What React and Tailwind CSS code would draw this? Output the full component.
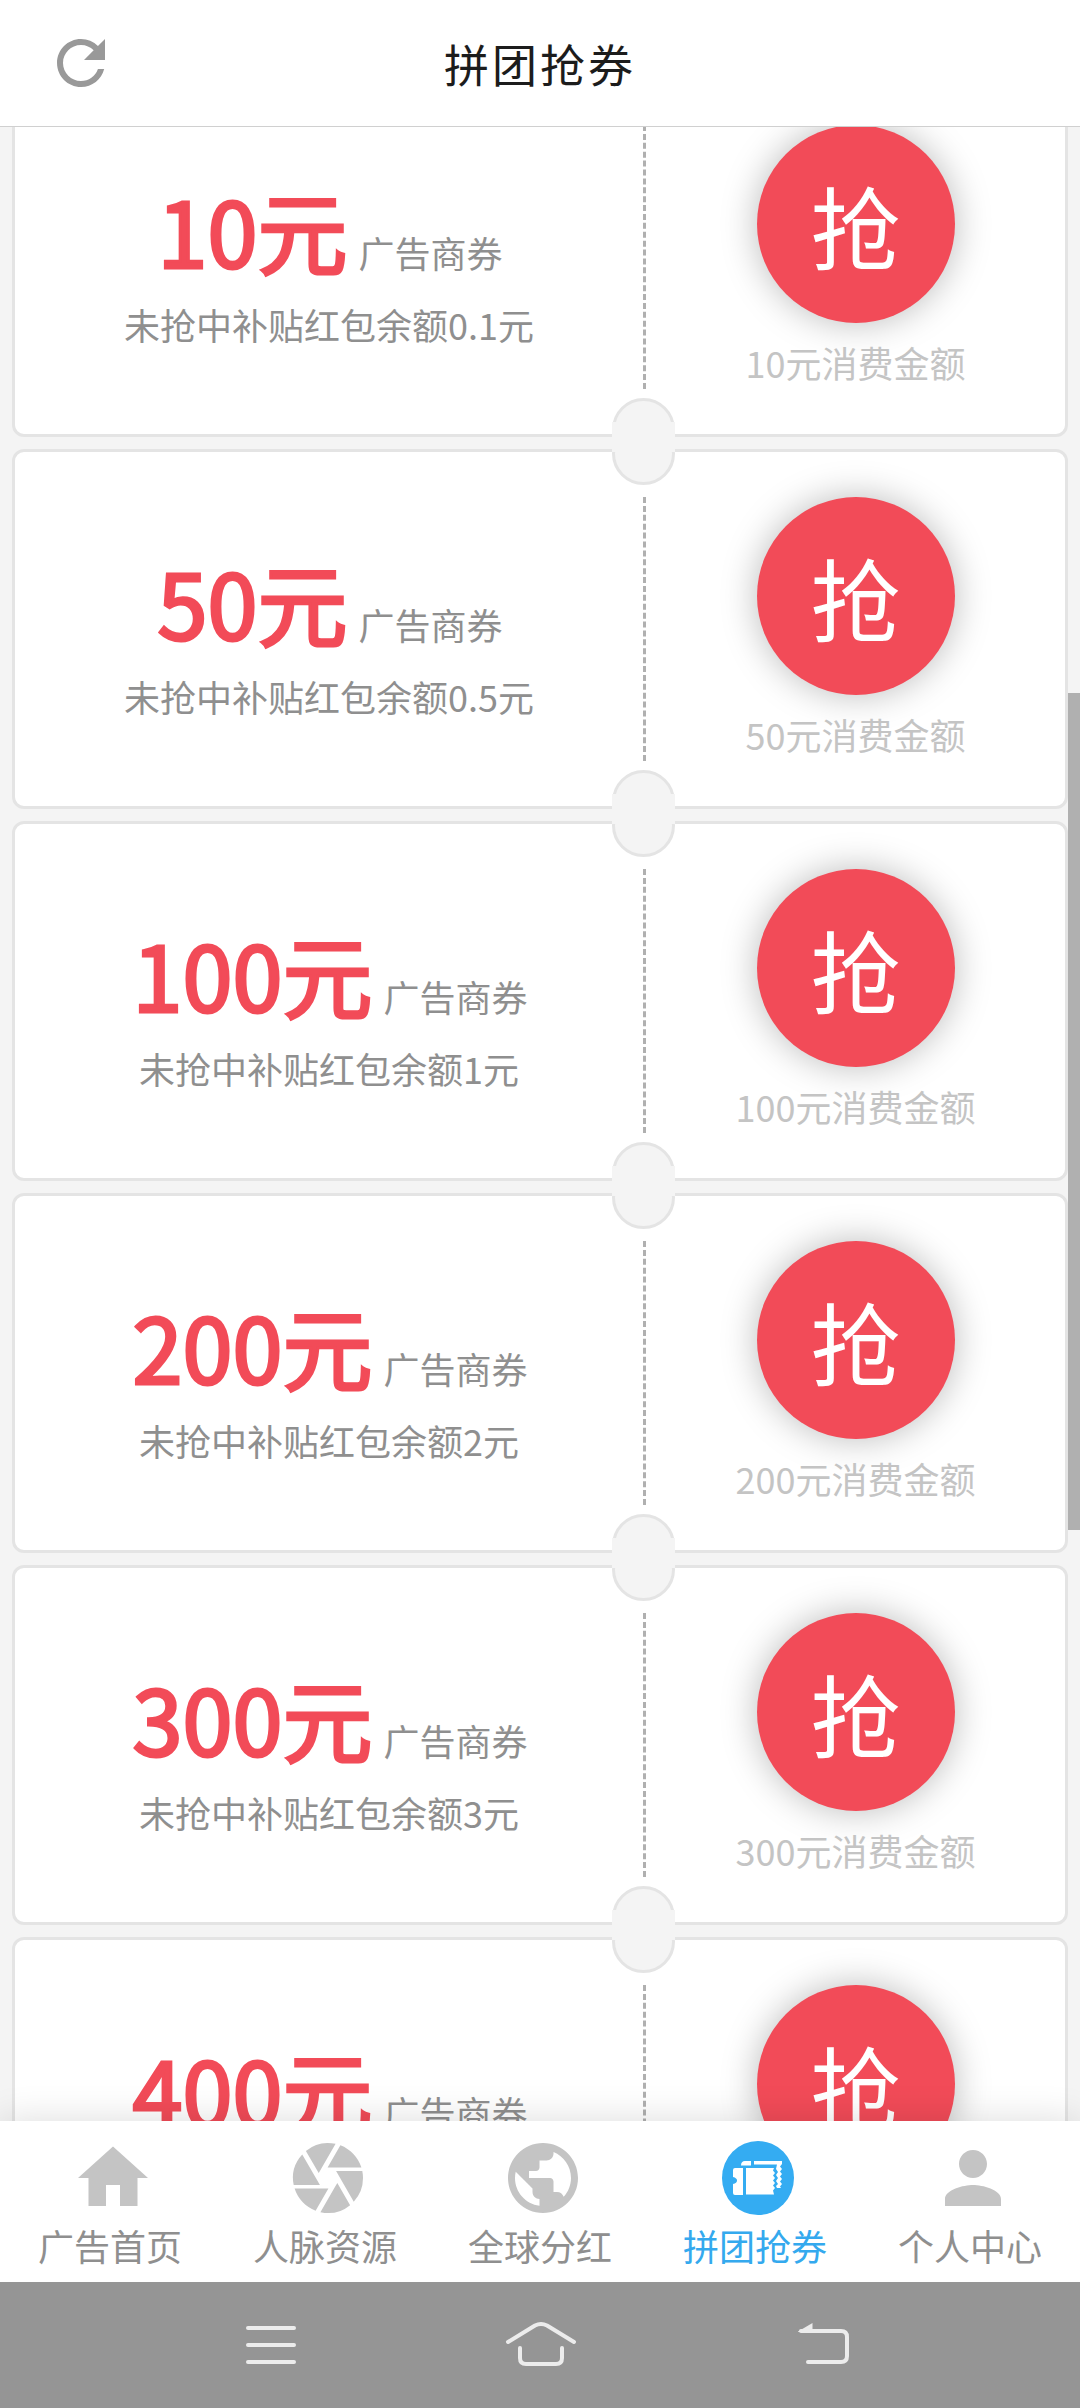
import { MdRefresh, MdHome, MdCamera, MdPublic, MdPerson } from "react-icons/md";

const coupons = [
  { amount: 10, subsidy: "0.1" },
  { amount: 50, subsidy: "0.5" },
  { amount: 100, subsidy: "1" },
  { amount: 200, subsidy: "2" },
  { amount: 300, subsidy: "3" },
  { amount: 400, subsidy: "4" },
];

function Coupon({ amount, subsidy }) {
  return (
    <article className="relative flex h-[360px] shrink-0 rounded-xl border-3 border-[#e4e4e4] bg-white">
      <div className="flex w-[628px] flex-col items-center pt-[96px]">
        <div className="flex items-baseline pl-[2px] whitespace-nowrap">
          <span className="text-[90px] leading-[106px] text-[#f24b58] [-webkit-text-stroke:3px_#f24b58]">{amount}元</span>
          <span className="ml-[11px] text-[36px] text-[#8f8f8f]">广告商券</span>
        </div>
        <p className="mt-[15px] text-[36px] leading-[54px] whitespace-nowrap text-[#8f8f8f]">未抢中补贴红包余额{subsidy}元</p>
      </div>
      <div className="mt-[45px] h-[264px] border-l-3 border-dashed border-[#b0b0b0]" />
      <div className="flex flex-1 flex-col items-center pt-[45px]">
        <button className="flex size-[198px] items-center justify-center rounded-full bg-[#f24b58] text-[90px] leading-none text-white shadow-[0_0_36px_rgba(0,0,0,0.27)]">
          抢
        </button>
        <p className="mt-[12px] text-[36px] leading-[54px] whitespace-nowrap text-[#c4c4c4]">{amount}元消费金额</p>
      </div>
      <div className="absolute top-[-30px] left-[597px] size-[63px] rounded-full border-3 border-[#e4e4e4] bg-[#f4f4f4]" />
      <div className="absolute top-[-30px] left-[597px] h-[30px] w-[63px] bg-[#f4f4f4]" />
      <div className="absolute top-[318px] left-[597px] size-[63px] rounded-full border-3 border-[#e4e4e4] bg-[#f4f4f4]" />
    </article>
  );
}

function TicketIcon() {
  return (
    <svg width="72" height="74" viewBox="0 0 72 74">
      <ellipse cx="36" cy="37" rx="36" ry="37" fill="#34acf2" />
      <g fill="#fff">
        <path d="M23 20h6v4.500H19q0-4.500 4-4.500zM32 20h28v3l-2 2.500 2 2.500-2 2.500 2 2.500-2 2.500 2 2.500-2 2.500 2 2.500-2 2.500 1 1.500h-4l-1-2 2-2-2-3 2-3-2-3 2-3-2-3 1-4.500H32z" />
        <path d="M13 27h8v27h-8q-2 0-2-2v-9q4-1 4-3.500T11 36v-7q0-2 2-2zM24 27h28l-1 2.500 2 2.500-2 2.500 2 2.500-2 2.500 2 2.500-2 2.500 2 2.500-2 2.500 1 4H24z" />
      </g>
    </svg>
  );
}

const tabs = [
  { label: "广告首页", icon: <MdHome size={84} /> },
  { label: "人脉资源", icon: <MdCamera size={84} /> },
  { label: "全球分红", icon: <MdPublic size={84} /> },
  { label: "拼团抢券", icon: <TicketIcon />, active: true },
  { label: "个人中心", icon: <MdPerson size={84} /> },
];

export default function App() {
  return (
    <div className="flex h-[2408px] w-[1080px] flex-col overflow-hidden bg-[#f4f4f4] font-['Noto_Sans_CJK_SC',sans-serif]">
      <header className="z-10 grid h-[127px] shrink-0 grid-cols-[1fr_auto_1fr] items-center border-b border-[#d0d0d0] bg-white">
        <button className="ml-[45px] size-[72px] text-[#999999]">
          <MdRefresh size={72} />
        </button>
        <h1 className="pt-[2px] text-[45px] leading-[60px] tracking-[3px] text-[#1c1c1c]">拼团抢券</h1>
      </header>

      <main className="flex min-h-0 flex-1 overflow-hidden">
        <div className="-mt-[50px] ml-3 flex w-[1056px] flex-col gap-3">
          {coupons.map((c) => (
            <Coupon key={c.amount} {...c} />
          ))}
        </div>
        <div className="mt-[566px] h-[837px] w-3 bg-[#b0b0b0]" />
      </main>

      <nav className="z-10 flex h-[161px] shrink-0 bg-white px-[2.5px] shadow-[0_0_36px_rgba(0,0,0,0.14)]">
        {tabs.map((t) => (
          <button key={t.label} className={t.active ? "flex w-[215px] flex-col items-center pt-[15px] text-[#34a9ee]" : "flex w-[215px] flex-col items-center pt-[15px] text-[#8f8f8f]"}>
            <span className={t.active ? "ml-[6px] flex h-[84px] items-center" : "ml-[6px] flex h-[84px] items-center text-[#c4c4c4]"}>{t.icon}</span>
            <span className="-mt-[2px] text-[36px] leading-[54px]">{t.label}</span>
          </button>
        ))}
      </nav>

      <footer className="z-10 flex h-[126px] shrink-0 items-center justify-center bg-[#959595]">
        <svg width="1080" height="126" viewBox="0 0 1080 126" fill="none" stroke="#ececec" strokeWidth="4" strokeLinecap="round" strokeLinejoin="round">
          <path d="M248 46H294M248 63H294M248 80H294" />
          <path d="M508 60L535 43.500Q541 40.500 547 43.500L574 60M520 66V76Q520 82 526 82H556Q562 82 562 76V66" />
          <path d="M808 80H841Q847 80 847 74V55Q847 49 841 49H801" />
          <path d="M798 49.500L812.500 41V50H798Z" fill="#ececec" stroke="none" />
        </svg>
      </footer>
    </div>
  );
}
